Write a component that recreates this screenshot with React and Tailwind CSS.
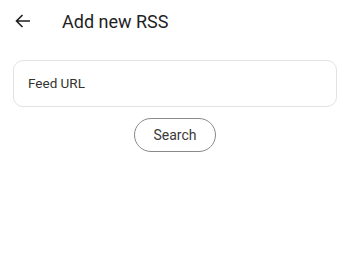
export default function App() {
  return (
    <div
      className="w-[350px] h-[280px] bg-white text-[#1f1f1f]"
      style={{ fontFamily: "Roboto, 'Liberation Sans', sans-serif" }}
    >
      <div className="flex items-center h-[42px] pl-[15px]">
        <svg width="16" height="14" viewBox="0 0 16 14" fill="none" stroke="#1f1f1f" strokeWidth="1.6">
          <path d="M15 7H1.5M7.5 1L1.5 7l6 6" />
        </svg>
        <span className="ml-[31px] text-[18px]">Add new RSS</span>
      </div>
      <div className="px-[13px] pt-[18px]">
        <div className="h-[47px] border border-[#e3e3e3] rounded-[10px] flex items-center pl-[14px] text-[13.5px] text-[#333]">
          Feed URL
        </div>
      </div>
      <div className="flex justify-center pt-[11px]">
        <button className="w-[82px] h-[34px] rounded-full border border-[#8a8a8a] text-[14px] text-[#3a3a3a]">
          Search
        </button>
      </div>
    </div>
  );
}
